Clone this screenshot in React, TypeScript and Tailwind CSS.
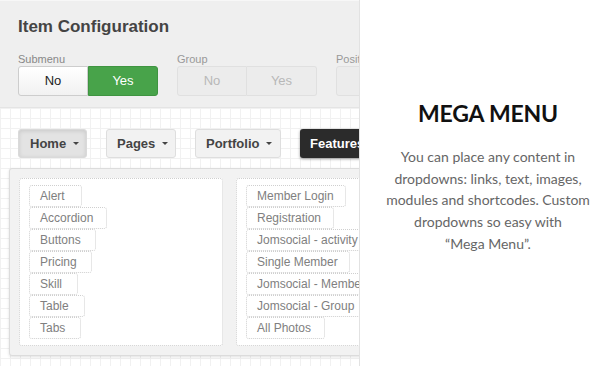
import React from "react";

const leftItems = [
  { t: "Alert", w: 53 },
  { t: "Accordion", w: 78 },
  { t: "Buttons", w: 67 },
  { t: "Pricing", w: 63 },
  { t: "Skill", w: 49 },
  { t: "Table", w: 56 },
  { t: "Tabs", w: 52 },
];
const rightItems = [
  { t: "Member Login", w: 100 },
  { t: "Registration", w: 88 },
  { t: "Jomsocial - activity", w: 130 },
  { t: "Single Member", w: 104 },
  { t: "Jomsocial - Member", w: 130 },
  { t: "Jomsocial - Group", w: 130 },
  { t: "All Photos", w: 79 },
];

function Caret({ light }: { light?: boolean }) {
  return (
    <span
      className={`ml-[7px] inline-block w-0 h-0 border-l-[3px] border-r-[3px] border-t-[3px] border-l-transparent border-r-transparent ${
        light ? "border-t-white" : "border-t-[#444]"
      }`}
    />
  );
}

function Item({ t, w }: { t: string; w: number }) {
  return (
    <div
      className="h-[22px] flex items-center pl-[10px] border border-dotted border-[#cfcfcf] rounded-[3px] text-[12px] text-[#808080] whitespace-nowrap shrink-0"
      style={{ width: w }}
    >
      {t}
    </div>
  );
}

export default function App() {
  return (
    <div className="flex w-[616px] h-[366px] overflow-hidden bg-white" style={{ fontFamily: '"Liberation Sans", Arial, sans-serif' }}>
      <div className="w-[360px] shrink-0 h-full flex flex-col border-r border-[#e2e2e2] overflow-hidden">
        {/* top config panel */}
        <div className="h-[108px] shrink-0 bg-[#efefef] border-t border-[#f7f7f7] border-b border-b-[#e4e4e4] pl-[18px] pt-[16px]">
          <div className="text-[17px] leading-[20px] font-bold text-[#444]">Item Configuration</div>
          <div className="flex gap-[19px] mt-[15px] whitespace-nowrap">
            <div className="w-[140px] shrink-0">
              <div className="text-[11px] leading-[14px] text-[#888]">Submenu</div>
              <div className="flex h-[30px]">
                <div className="w-[70px] flex items-center justify-center bg-[linear-gradient(#ffffff,#f1f1f1)] border border-[#cdcdcd] rounded-l-[3px] text-[13px] text-[#222]">No</div>
                <div className="w-[70px] flex items-center justify-center bg-[#48a34a] border border-[#3f9441] rounded-r-[3px] text-[13px] text-white">Yes</div>
              </div>
            </div>
            <div className="w-[140px] shrink-0">
              <div className="text-[11px] leading-[14px] text-[#999]">Group</div>
              <div className="flex h-[30px]">
                <div className="w-[70px] flex items-center justify-center bg-[#ececec] border border-[#e0e0e0] rounded-l-[3px] text-[13px] text-[#b8b8b8]">No</div>
                <div className="w-[70px] flex items-center justify-center bg-[#ececec] border border-l-0 border-[#e0e0e0] rounded-r-[3px] text-[13px] text-[#b8b8b8]">Yes</div>
              </div>
            </div>
            <div className="w-[140px] shrink-0">
              <div className="text-[11px] leading-[14px] text-[#999]">Position</div>
              <div className="flex h-[30px]">
                <div className="w-[70px] bg-[#ececec] border border-[#e0e0e0] rounded-l-[3px]" />
              </div>
            </div>
          </div>
        </div>
        {/* grid area */}
        <div className="flex-1 bg-white bg-[linear-gradient(to_right,#f1f1f1_1px,transparent_1px),linear-gradient(to_bottom,#f1f1f1_1px,transparent_1px)] bg-[size:10px_10px] pt-[21px] pl-[9px]">
          <div className="flex gap-[19px] pl-[9px] whitespace-nowrap">
            <div className="h-[29px] w-[69px] shrink-0 flex items-center pl-[11px] bg-[#e3e3e3] border border-[#dadada] rounded-[3px] shadow-[inset_0_1px_4px_rgba(0,0,0,0.12)] text-[13px] font-bold text-[#444]">
              Home<Caret />
            </div>
            <div className="h-[29px] w-[70px] shrink-0 flex items-center pl-[10px] bg-[#f2f2f2] border border-[#dedede] rounded-[3px] text-[13px] font-bold text-[#444]">
              Pages<Caret />
            </div>
            <div className="h-[29px] w-[86px] shrink-0 flex items-center pl-[10px] bg-[#f2f2f2] border border-[#dedede] rounded-[3px] text-[13px] font-bold text-[#444]">
              Portfolio<Caret />
            </div>
            <div className="h-[29px] w-[90px] shrink-0 flex items-center pl-[10px] bg-[#2b2b2b] rounded-[3px] shadow-[0_1px_3px_rgba(0,0,0,0.4)] text-[13px] font-bold text-white">
              Features<Caret light />
            </div>
          </div>
          {/* dropdown panel */}
          <div className="mt-[10px] w-[380px] h-[188px] bg-[#f2f2f2] border border-[#dcdcdc] rounded-[3px] shadow-[0_1px_3px_rgba(0,0,0,0.12)] p-[9px] flex gap-[13px]">
            <div className="w-[204px] h-[168px] shrink-0 bg-white border border-dotted border-[#cfcfcf] rounded-[3px] pt-[6px] pl-[9px] flex flex-col">
              {leftItems.map((i) => (
                <Item key={i.t} t={i.t} w={i.w} />
              ))}
            </div>
            <div className="w-[204px] h-[168px] shrink-0 bg-white border border-dotted border-[#cfcfcf] rounded-[3px] pt-[6px] pl-[9px] flex flex-col">
              {rightItems.map((i) => (
                <Item key={i.t} t={i.t} w={i.w} />
              ))}
            </div>
          </div>
        </div>
      </div>
      {/* right description */}
      <div className="flex-1 flex flex-col items-center pt-[99px]">
        <div className="text-[23px] leading-[28px] font-bold text-[#111] tracking-[-0.2px]" style={{ fontFamily: "Lato, sans-serif" }}>
          MEGA MENU
        </div>
        <div
          className="mt-[19px] text-center text-[14px] leading-[21.7px] text-[#666] whitespace-nowrap"
          style={{ fontFamily: "Lato, sans-serif" }}
        >
          You can place any content in
          <br />
          dropdowns: links, text, images,
          <br />
          modules and shortcodes. Custom
          <br />
          dropdowns so easy with
          <br />
          “Mega Menu”.
        </div>
      </div>
    </div>
  );
}
